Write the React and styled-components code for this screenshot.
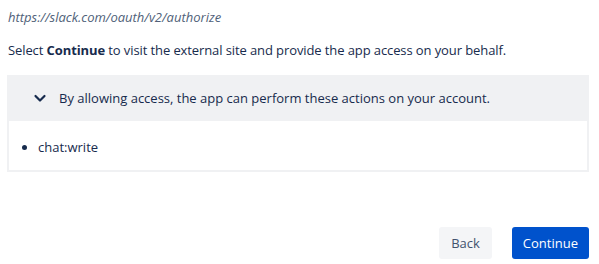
import React from 'react';
import styled, { createGlobalStyle } from 'styled-components';

const GlobalStyle = createGlobalStyle`
  html, body {
    margin: 0;
    padding: 0;
    background: #ffffff;
  }
  body {
    font-family: "Open Sans", "Noto Sans", sans-serif;
    font-size: 13px;
    color: #172b4d;
  }
`;

const Page = styled.div`
  width: 599px;
  height: 264px;
  box-sizing: border-box;
  padding: 8px 10px 5px 8px;
  display: flex;
  flex-direction: column;
`;

const Url = styled.div`
  font-style: italic;
  color: #505f79;
  line-height: 18px;
`;

const Intro = styled.p`
  margin: 15px 0 0;
  line-height: 18px;
  letter-spacing: -0.1px;
  color: #172b4d;

  b {
    font-weight: 700;
  }
`;

const Panel = styled.div`
  margin: 16px 0 0 -1px;
  border: 2px solid #f0f1f3;
  border-top: none;
`;

const PanelHeader = styled.div`
  background: #f0f1f3;
  height: 46px;
  display: flex;
  align-items: center;
  padding-left: 23px;
  gap: 11px;
  color: #172b4d;
`;

const Chevron = styled.svg`
  width: 16px;
  height: 16px;
  flex: none;
`;

const ScopeList = styled.ul`
  margin: 0;
  padding: 17px 0 14px 29px;
  list-style: disc;
  color: #172b4d;

  li {
    line-height: 18px;
  }
`;

const Actions = styled.div`
  margin-top: auto;
  display: flex;
  justify-content: flex-end;
  gap: 20px;
`;

const Button = styled.button`
  height: 32px;
  border: none;
  border-radius: 3px;
  padding: 0 ${props => (props.primary ? '11px' : '12px')};
  font-family: inherit;
  font-size: 13px;
  cursor: pointer;
  background: ${props => (props.primary ? '#0052cc' : '#f4f5f7')};
  color: ${props => (props.primary ? '#ffffff' : '#42526e')};
`;

export default function App() {
  return (
    <>
      <GlobalStyle />
      <Page>
        <Url>https://slack.com/oauth/v2/authorize</Url>
        <Intro>
          Select <b>Continue</b> to visit the external site and provide the app access on your behalf.
        </Intro>
        <Panel>
          <PanelHeader>
            <Chevron viewBox="0 0 16 16">
              <path d="M3.5 6 L8 10.5 L12.5 6" fill="none" stroke="#172b4d" strokeWidth="2.2" strokeLinecap="round" strokeLinejoin="round" />
            </Chevron>
            By allowing access, the app can perform these actions on your account.
          </PanelHeader>
          <ScopeList>
            <li>chat:write</li>
          </ScopeList>
        </Panel>
        <Actions>
          <Button>Back</Button>
          <Button primary>Continue</Button>
        </Actions>
      </Page>
    </>
  );
}
